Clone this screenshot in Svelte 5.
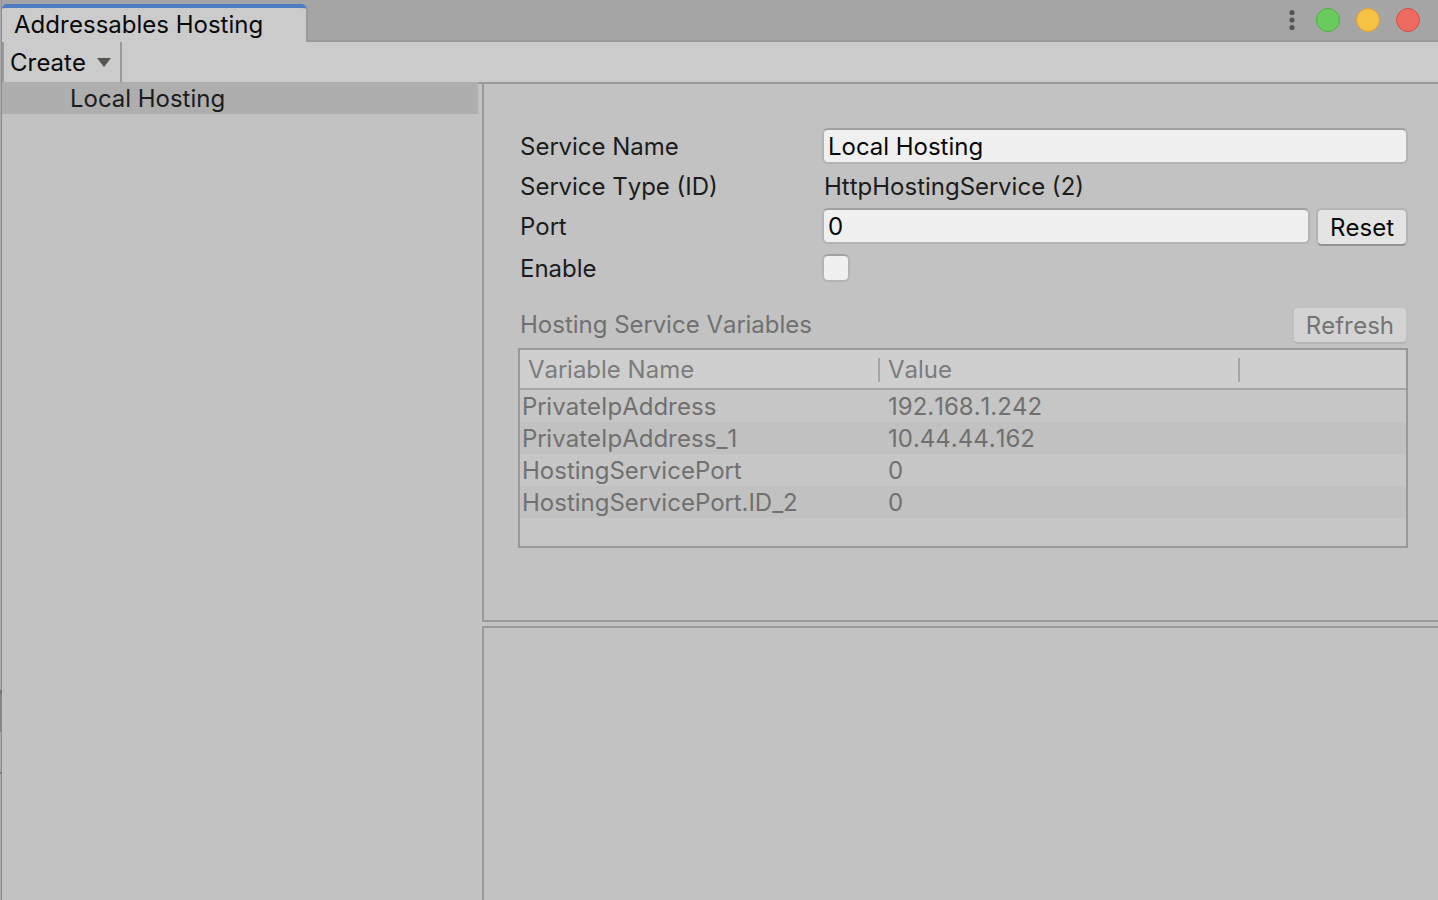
<script lang="ts">
  interface Variable {
    name: string;
    value: string;
  }

  const variables: Variable[] = [
    { name: 'PrivateIpAddress', value: '192.168.1.242' },
    { name: 'PrivateIpAddress_1', value: '10.44.44.162' },
    { name: 'HostingServicePort', value: '0' },
    { name: 'HostingServicePort.ID_2', value: '0' }
  ];

  let serviceName = $state('Local Hosting');
  let port = $state('0');
  let enabled = $state(false);
</script>

<div class="window">
  <header class="titlebar">
    <div class="tab">Addressables Hosting</div>
    <div class="window-controls">
      <button class="more" type="button" aria-label="Window menu">
        <svg width="6" height="22" viewBox="0 0 6 22">
          <circle cx="3" cy="3.5" r="2.6" />
          <circle cx="3" cy="11" r="2.6" />
          <circle cx="3" cy="18.5" r="2.6" />
        </svg>
      </button>
      <button class="light green" type="button" aria-label="Maximize"></button>
      <button class="light yellow" type="button" aria-label="Minimize"></button>
      <button class="light red" type="button" aria-label="Close"></button>
    </div>
  </header>

  <div class="toolbar">
    <button class="create" type="button">
      Create
      <svg width="14" height="10" viewBox="0 0 14 10"><path d="M0 0H14L7 9Z" /></svg>
    </button>
  </div>

  <div class="body">
    <nav class="services">
      <button class="service selected" type="button">{serviceName}</button>
    </nav>

    <main class="panes">
      <section class="pane details">
        <div class="row">
          <label for="service-name">Service Name</label>
          <input id="service-name" class="field" type="text" bind:value={serviceName} />
        </div>
        <div class="row">
          <span class="label">Service Type (ID)</span>
          <span class="static">HttpHostingService (2)</span>
        </div>
        <div class="row">
          <label for="port">Port</label>
          <input id="port" class="field" type="text" bind:value={port} />
          <button class="btn" type="button" onclick={() => (port = '0')}>Reset</button>
        </div>
        <div class="row check-row">
          <label for="enable">Enable</label>
          <input id="enable" class="check" type="checkbox" bind:checked={enabled} />
        </div>

        <div class="variables-head">
          <span>Hosting Service Variables</span>
          <button class="btn refresh" type="button" disabled={!enabled}>Refresh</button>
        </div>
        <div class="variables">
          <table>
            <thead>
              <tr>
                <th class="col"><span>Variable Name</span></th>
                <th class="col"><span>Value</span></th>
                <th></th>
              </tr>
            </thead>
            <tbody>
              {#each variables as variable}
                <tr>
                  <td>{variable.name}</td>
                  <td>{variable.value}</td>
                  <td></td>
                </tr>
              {/each}
            </tbody>
          </table>
        </div>
      </section>
      <section class="pane log"></section>
    </main>
  </div>
</div>

<style>
  :global(body) {
    margin: 0;
  }
  .window {
    display: flex;
    flex-direction: column;
    min-height: 100vh;
    box-sizing: border-box;
    padding-left: 2px;
    /* a sliver of the window behind shows along the left edge */
    background:
      linear-gradient(#747474, #747474) 0 690px / 2px 4px no-repeat,
      linear-gradient(#858585, #858585) 0 694px / 2px 38px no-repeat,
      linear-gradient(#7c7c7c, #7c7c7c) 0 772px / 2px 2px no-repeat,
      linear-gradient(90deg, #a9a9a9 1px, #8f8f8f 1px) 0 0 / 2px 100% no-repeat,
      #c2c2c2;
    color: #1c1c1c;
    font-family: Inter, "Liberation Sans", sans-serif;
    font-size: 24px;
    font-kerning: none;
    font-optical-sizing: none;
    line-height: 32px;
  }
  button,
  input {
    box-sizing: border-box;
    margin: 0;
    font: inherit;
    font-kerning: none;
    font-optical-sizing: none;
    color: #090909;
  }

  .titlebar {
    display: flex;
    justify-content: space-between;
    height: 42px;
    background: linear-gradient(#999, #999) 0 100% / 100% 2px no-repeat, #a5a5a5;
  }
  .tab {
    box-sizing: border-box;
    margin-top: 4px;
    padding: 1px 43px 0 12px;
    border-top: 4px solid #4c7cc4;
    border-radius: 5px 5px 0 0;
    box-shadow: 2px 0 #999;
    background: #cbcbcb;
    color: #090909;
    white-space: nowrap;
  }
  .window-controls {
    display: flex;
    align-items: center;
    gap: 16px;
    height: 40px;
    padding-right: 18px;
  }
  .more {
    display: flex;
    padding: 0 5px;
    border: 0;
    background: none;
    fill: #555;
  }
  .light {
    width: 24px;
    height: 24px;
    padding: 0;
    border: 1px solid;
    border-radius: 50%;
  }
  .green {
    background: #68cb5b;
    border-color: #50b047;
  }
  .yellow {
    background: #f6c244;
    border-color: #dca236;
  }
  .red {
    background: #ed6b60;
    border-color: #d35149;
  }

  .toolbar {
    display: flex;
    height: 40px;
    background: #cbcbcb;
  }
  .create {
    display: flex;
    align-items: center;
    gap: 11px;
    padding: 2px 9px 0 6px;
    border: solid #999;
    border-width: 0 2px;
    background: none;
  }
  .create svg {
    fill: #555550;
  }

  .body {
    display: flex;
    flex: 1;
  }
  .services {
    flex: 0 0 476px;
  }
  .service {
    display: block;
    width: 100%;
    height: 32px;
    padding: 1px 0 0 68px;
    border: 0;
    background: none;
    color: #1c1c1c;
    text-align: left;
  }
  .selected {
    background: #aeaeae;
  }

  .panes {
    display: flex;
    flex: 1;
    flex-direction: column;
    gap: 4px;
    min-width: 0;
    padding-left: 4px;
    border-top: 2px solid #999;
  }
  .pane {
    border-left: 2px solid #999;
  }
  .details {
    display: flex;
    flex-direction: column;
    gap: 4px;
    padding: 44px 30px 72px 34px;
    border-bottom: 2px solid #999;
  }
  .log {
    flex: 1;
    border-top: 2px solid #999;
  }

  .row {
    display: flex;
    align-items: flex-start;
    line-height: 38px;
  }
  .row label,
  .label,
  .static {
    height: 36px;
    padding-left: 2px;
  }
  .row label,
  .label {
    flex: 0 0 302px;
  }
  .field,
  .btn,
  .check {
    border: 2px solid #b4b4b4;
    border-radius: 6px;
  }
  .field {
    flex: 1;
    min-width: 0;
    height: 36px;
    padding: 0 4px;
    border-top-color: #a0a0a0;
    background: #f0f0f0;
    line-height: 32px;
  }
  .btn {
    height: 38px;
    margin-left: 6px;
    padding: 2px 12px 0;
    border-bottom-color: #939393;
    background: #e4e4e4;
    line-height: 32px;
  }
  .check-row {
    align-items: center;
  }
  .check {
    width: 28px;
    height: 28px;
    border-top-color: #a0a0a0;
    background: #f0f0f0;
    appearance: none;
  }
  .check:checked {
    box-shadow: inset 0 0 0 6px #f0f0f0;
    background: #404040;
  }

  .variables-head {
    display: flex;
    align-items: center;
    justify-content: space-between;
    margin-top: 16px;
    padding-left: 2px;
    color: #707070;
  }
  .refresh:disabled {
    border-color: #c0c0c0;
    border-bottom-color: #b4b4b4;
    background: #d3d3d3;
    color: #747474;
  }
  .variables {
    padding-bottom: 28px;
    border: 2px solid #999;
    background: #c6c6c6;
  }
  table {
    width: 100%;
    border-collapse: collapse;
    table-layout: fixed;
    color: #707070;
  }
  th,
  td {
    padding: 0;
    font-weight: 400;
    text-align: left;
  }
  thead {
    background: #cfcfcf;
    color: #7c7c7c;
  }
  th {
    height: 36px;
    padding-top: 2px;
    box-shadow: 0 2px #a6a6a6;
  }
  .col {
    width: 360px;
  }
  .col span {
    display: block;
    padding-left: 8px;
    border-right: 2px solid #a6a6a6;
    line-height: 24px;
  }
  tbody::before {
    content: "";
    display: block;
    height: 2px;
  }
  td {
    height: 30px;
    padding: 2px 0 0 8px;
    line-height: 30px;
  }
  td:first-child {
    padding-left: 2px;
  }
  tbody tr:nth-child(even) {
    background: #c1c1c1;
  }
</style>
